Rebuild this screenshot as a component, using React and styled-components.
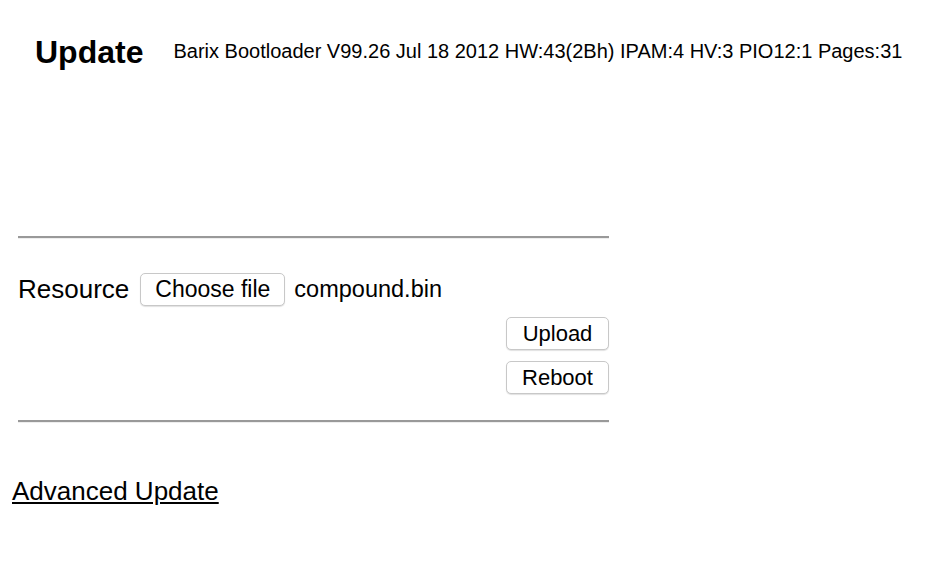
import React from "react"
import styled, { createGlobalStyle } from "styled-components"

const GlobalStyle = createGlobalStyle`
  html, body {
    margin: 0;
    padding: 0;
    background: #fff;
    font-family: "Liberation Sans", Arial, sans-serif;
    color: #000;
  }
`

const Page = styled.div`
  width: 946px;
  height: 564px;
  box-sizing: border-box;
  padding: 34px 0 0 12px;
`

const Header = styled.header`
  display: flex;
  align-items: flex-start;
  gap: 30px;
  padding-left: 23px;
  height: 202px;
`

const Title = styled.h1`
  margin: 0;
  font-size: 32px;
  font-weight: bold;
`

const Info = styled.span`
  font-size: 20px;
  margin-top: 6px;
`

const Panel = styled.section`
  width: 591px;
  margin-left: 6px;
`

const Rule = styled.hr`
  margin: 0;
  height: 0;
  border: 0;
  border-top: 2px solid #999;
  border-bottom: 1px solid #eee;
`

const Form = styled.div`
  display: flex;
  flex-direction: column;
  padding: 34px 0 26px;
  gap: 11px;
`

const FileRow = styled.div`
  display: flex;
  align-items: center;
  gap: 11px;
  font-size: 23.5px;
`

const Label = styled.span`
  font-size: 26px;
`

const FileName = styled.span`
  margin-left: -2px;
`

const Button = styled.button`
  font-family: "Liberation Sans", Arial, sans-serif;
  font-size: ${p => (p.$right ? "22px" : "23px")};
  color: #000;
  background: #fff;
  border: 1px solid #c8c8c8;
  border-radius: 5px;
  box-shadow: 0 1px 1px rgba(0, 0, 0, 0.12);
  height: 33px;
  padding: 0 14px;
  min-width: ${p => (p.$right ? "103px" : "0")};
`

const Actions = styled.div`
  display: flex;
  flex-direction: column;
  align-items: flex-end;
  gap: 11px;
`

const AdvancedLink = styled.a`
  display: inline-block;
  margin-top: 53px;
  font-size: 26px;
  color: #000;
  text-decoration: underline;
`

export default function App() {
  return (
    <>
      <GlobalStyle />
      <Page>
        <Header>
          <Title>Update</Title>
          <Info>Barix Bootloader V99.26 Jul 18 2012 HW:43(2Bh) IPAM:4 HV:3 PIO12:1 Pages:31</Info>
        </Header>
        <Panel>
          <Rule />
          <Form>
            <FileRow>
              <Label>Resource</Label>
              <Button>Choose file</Button>
              <FileName>compound.bin</FileName>
            </FileRow>
            <Actions>
              <Button $right>Upload</Button>
              <Button $right>Reboot</Button>
            </Actions>
          </Form>
          <Rule />
        </Panel>
        <AdvancedLink href="#">Advanced Update</AdvancedLink>
      </Page>
    </>
  )
}
